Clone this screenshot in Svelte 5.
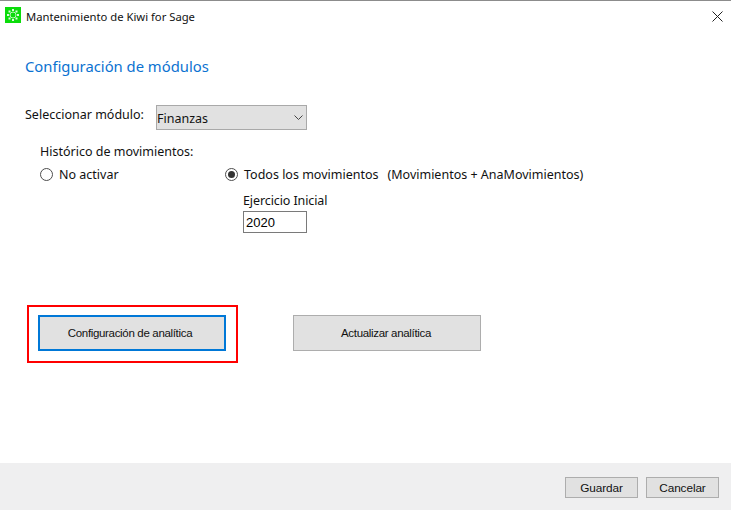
<script>
	let modulo = 'Finanzas';
	let ejercicio = '2020';
</script>

<style>
	:global(body) { margin: 0; background: #fff; }
	.window {
		width: 731px;
		height: 510px;
		display: flex;
		flex-direction: column;
		border-top: 1px solid #8c8c8c;
		box-sizing: border-box;
		font-family: "Noto Sans", "Open Sans", sans-serif;
		font-size: 12.5px;
		color: #111;
		overflow: hidden;
	}
	.titlebar {
		height: 30px;
		display: flex;
		align-items: center;
		padding: 0 8px 0 5px;
		gap: 5px;
		font-size: 11.25px;
	}
	.titlebar .name { flex: 1; }
	.close { display: block; }
	.logo { display: block; margin-top: -2px; }
	.content {
		flex: 1;
		padding: 24px 0 0 25px;
		display: flex;
		flex-direction: column;
	}
	h1 {
		margin: 0;
		height: 24px;
		line-height: 22px;
		font-size: 14.8px;
		font-weight: 400;
		color: #0b72d1;
	}
	.module-row {
		margin-top: 26px;
		display: flex;
		gap: 12px;
		align-items: flex-start;
	}
	.module-row label { line-height: 19px; width: 119px; }
	.select {
		width: 151px;
		height: 25px;
		box-sizing: border-box;
		border: 1px solid #a9a9a9;
		background: #e1e1e1;
		padding: 3px 3px 0 0;
		display: flex;
		align-items: center;
		justify-content: space-between;
		line-height: 1;
	}
	.select svg { margin-top: -3px; }
	.history { margin: 12px 0 0 15px; }
	.history-title { line-height: 20px; }
	.options {
		margin-top: 2px;
		display: flex;
	}
	.option {
		display: flex;
		align-items: center;
		gap: 6px;
		height: 20px;
	}
	.option.off { width: 185px; }
	.radio {
		width: 13px;
		height: 13px;
		box-sizing: border-box;
		border: 1px solid #4d4d4d;
		border-radius: 50%;
		display: flex;
		align-items: center;
		justify-content: center;
		flex: none;
	}
	.radio.on::after {
		content: "";
		width: 7px;
		height: 7px;
		border-radius: 50%;
		background: #333;
	}
	.extra { margin-left: 3px; }
	.start { margin: 7px 0 0 203px; }
	.start-label { line-height: 20px; letter-spacing: -0.1px; }
	.start input {
		display: block;
		width: 64px;
		height: 22px;
		box-sizing: border-box;
		border: 1px solid #7a7a7a;
		padding: 0 2px;
		margin: 0;
		font-family: "Liberation Sans", sans-serif;
		font-size: 13px;
		color: #000;
		outline: none;
	}
	.actions {
		margin-top: 72px;
		display: flex;
		align-items: flex-start;
	}
	.highlight {
		margin-left: 2px;
		width: 211px;
		height: 58px;
		box-sizing: border-box;
		border: 2px solid #f00;
		padding: 8px 0 0 9px;
	}
	button {
		font-family: "Liberation Sans", sans-serif;
		background: #e1e1e1;
		border: 1px solid #adadad;
		box-sizing: border-box;
		color: #111;
		padding: 0;
	}
	.big {
		display: block;
		width: 188px;
		height: 36px;
		font-size: 11.5px;
		letter-spacing: -0.33px;
		padding: 0 2px 0 0;
	}
	.big.focus { border: 2px solid #0078d7; padding-right: 4px; }
	.actions > .big { margin: 10px 0 0 55px; }
	.footer {
		height: 47px;
		background: #efeff0;
		display: flex;
		align-items: center;
		justify-content: flex-end;
		gap: 8px;
		padding: 2px 12px 0 0;
		box-sizing: border-box;
	}
	.footer button {
		width: 73px;
		height: 21px;
		font-size: 11.8px;
		letter-spacing: -0.1px;
	}
</style>

<div class="window">
	<div class="titlebar">
		<svg class="logo" width="16" height="16" viewBox="0 0 16 16">
			<rect width="16" height="16" fill="#0bdc0b" />
			<g fill="none" stroke="#b6f5b6" stroke-width="1">
				<circle cx="8" cy="8" r="3" />
			</g>
			<g fill="#dcfbdc">
				<rect x="7" y="2" width="2" height="2" />
				<rect x="7" y="12" width="2" height="2" />
				<rect x="2" y="7" width="2" height="2" />
				<rect x="12" y="7" width="2" height="2" />
				<rect x="3.5" y="3.5" width="2" height="2" />
				<rect x="10.5" y="3.5" width="2" height="2" />
				<rect x="3.5" y="10.5" width="2" height="2" />
				<rect x="10.5" y="10.5" width="2" height="2" />
			</g>
		</svg>
		<span class="name">Mantenimiento de Kiwi for Sage</span>
		<svg class="close" width="11" height="11" viewBox="0 0 11 11">
			<path d="M0.5 0.5 L10.5 10.5 M10.5 0.5 L0.5 10.5" stroke="#222" stroke-width="1" fill="none" />
		</svg>
	</div>

	<div class="content">
		<h1>Configuración de módulos</h1>

		<div class="module-row">
			<label for="modulo">Seleccionar módulo:</label>
			<div class="select" id="modulo">
				<span>{modulo}</span>
				<svg width="9" height="5" viewBox="0 0 9 5">
					<path d="M0.5 0.5 L4.5 4.5 L8.5 0.5" stroke="#444" fill="none" />
				</svg>
			</div>
		</div>

		<div class="history">
			<div class="history-title">Histórico de movimientos:</div>
			<div class="options">
				<div class="option off"><span class="radio"></span>No activar</div>
				<div class="option"><span class="radio on"></span>Todos los movimientos <span class="extra">(Movimientos + AnaMovimientos)</span></div>
			</div>
			<div class="start">
				<div class="start-label">Ejercicio Inicial</div>
				<input type="text" bind:value={ejercicio} />
			</div>
		</div>

		<div class="actions">
			<div class="highlight">
				<button class="big focus">Configuración de analítica</button>
			</div>
			<button class="big">Actualizar analítica</button>
		</div>
	</div>

	<div class="footer">
		<button>Guardar</button>
		<button>Cancelar</button>
	</div>
</div>
